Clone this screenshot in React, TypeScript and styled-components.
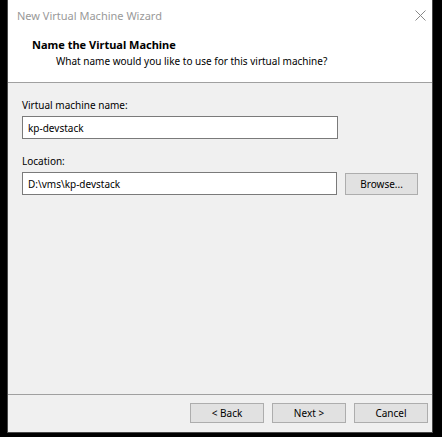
import * as React from "react";
import styled, { createGlobalStyle } from "styled-components";

const Global = createGlobalStyle`
  html, body {
    margin: 0;
    padding: 0;
    background: #000;
  }
  body {
    font-family: "Noto Sans", "Open Sans", sans-serif;
    font-size: 10px;
    color: #000;
  }
`;

const Window = styled.div`
  box-sizing: border-box;
  width: 426px;
  height: 433px;
  margin-left: 7px;
  border: 1px solid #4a4a4a;
  border-top: none;
  background: #f0f0f0;
  display: flex;
  flex-direction: column;
`;

const TitleBar = styled.div`
  height: 30px;
  background: #fff;
  display: flex;
  align-items: center;
  justify-content: space-between;
  padding: 0 5px 0 9px;
`;

const Title = styled.div`
  font-size: 11px;
  color: #999;
`;

const Close = styled.div`
  width: 14px;
  height: 14px;
  display: flex;
  align-items: center;
  justify-content: center;
`;

const Header = styled.div`
  background: #fff;
  height: 53px;
  border-bottom: 1px solid #a0a0a0;
  padding: 7px 0 0 24px;
  box-sizing: border-box;
`;

const Heading = styled.div`
  font-weight: bold;
  font-size: 11px;
  line-height: 16px;
`;

const Subheading = styled.div`
  padding-left: 24px;
  line-height: 16px;
`;

const Body = styled.div`
  flex: 1;
  padding: 14px 14px 0 14px;
  display: flex;
  flex-direction: column;
`;

const Label = styled.div`
  line-height: 16px;
  margin-bottom: 3px;
`;

const Row = styled.div`
  display: flex;
  align-items: center;
  gap: 8px;
  margin-bottom: 14px;
`;

const Field = styled.div`
  box-sizing: border-box;
  width: 316px;
  height: 23px;
  background: #fff;
  border: 1px solid #7a7a7a;
  padding: 0 5px;
  display: flex;
  align-items: center;
`;

const Button = styled.div<{ $w?: number }>`
  box-sizing: border-box;
  width: ${(p) => p.$w ?? 74}px;
  height: ${(p) => (p.$w ? 22 : 20)}px;
  background: #e1e1e1;
  border: 1px solid #adadad;
  display: flex;
  align-items: center;
  justify-content: center;
`;

const Footer = styled.div`
  height: 38px;
  border-top: 1px solid #a0a0a0;
  display: flex;
  justify-content: flex-end;
  align-items: flex-start;
  gap: 8px;
  padding: 8px 4px 0 0;
  box-sizing: border-box;
`;

export default function App() {
  return (
    <>
      <Global />
      <Window>
        <TitleBar>
          <Title>New Virtual Machine Wizard</Title>
          <Close>
            <svg width="11" height="11" viewBox="0 0 11 11">
              <path d="M0.5 0.5 L10.5 10.5 M10.5 0.5 L0.5 10.5" stroke="#888" strokeWidth="1" />
            </svg>
          </Close>
        </TitleBar>
        <Header>
          <Heading>Name the Virtual Machine</Heading>
          <Subheading>What name would you like to use for this virtual machine?</Subheading>
        </Header>
        <Body>
          <Label>Virtual machine name:</Label>
          <Row>
            <Field>kp-devstack</Field>
          </Row>
          <Label>Location:</Label>
          <Row>
            <Field>D:\vms\kp-devstack</Field>
            <Button $w={73}>Browse...</Button>
          </Row>
        </Body>
        <Footer>
          <Button>&lt; Back</Button>
          <Button>Next &gt;</Button>
          <Button>Cancel</Button>
        </Footer>
      </Window>
    </>
  );
}
